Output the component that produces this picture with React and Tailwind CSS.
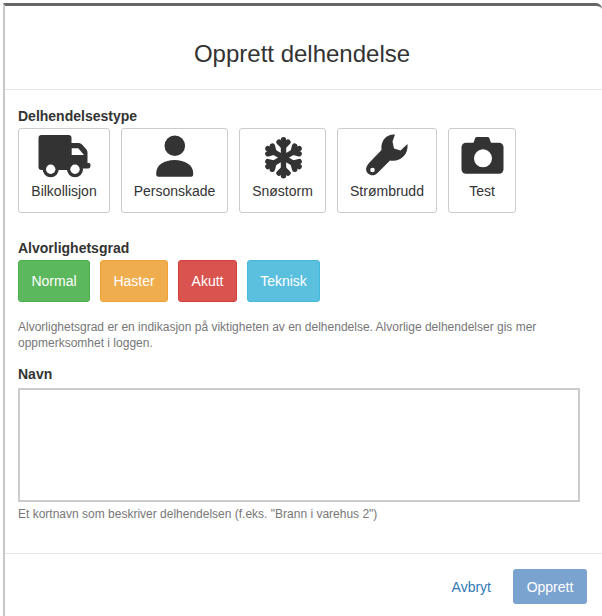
const INK = "#333";

function TruckIcon() {
  return (
    <svg width="66" height="50" viewBox="0 0 66 50" fill={INK}>
      <g transform="translate(-1 0)">
        <rect x="8.5" y="5" width="33" height="35" rx="3" />
        <path d="M41 13H49C50 13 51 13.5 52 14.5L56 19C57 20 57.5 21 57.5 23V33H59C60 33 60.5 34 60.5 35C60.5 37 60 38.5 58 38.5H41Z" />
        <path d="M41.7 18.3H48.3L54 25H41.7Z" fill="#fff" />
        <circle cx="20.7" cy="39.3" r="8" />
        <circle cx="20.7" cy="39.3" r="4.7" fill="#fff" />
        <circle cx="45" cy="39.3" r="8" />
        <circle cx="45" cy="39.3" r="4.7" fill="#fff" />
      </g>
    </svg>
  );
}

function PersonIcon() {
  return (
    <svg width="60" height="50" viewBox="0 0 60 50" fill={INK}>
      <circle cx="29.8" cy="15.7" r="10.3" />
      <path d="M11.2 44V43C11.2 35 19.5 30 29.5 30C39.5 30 48.2 35 48.2 43V44C48.2 45.8 47.5 46.7 46 46.7H13.4C11.9 46.7 11.2 45.8 11.2 44Z" />
    </svg>
  );
}

function SnowIcon() {
  return (
    <svg width="60" height="50" viewBox="0 0 60 50" stroke={INK} strokeWidth="5.4" strokeLinecap="round" fill="none">
      <g transform="translate(30.5 27.7)">
        {[0, 60, 120, 180, 240, 300].map((a) => (
          <g key={a} transform={`rotate(${a})`}>
            <path d="M0 0V-18" />
            <path d="M-4.5 -15.5L0 -11L4.5 -15.5" />
          </g>
        ))}
      </g>
    </svg>
  );
}

function WrenchIcon() {
  return (
    <svg width="60" height="50" viewBox="0 0 60 50" fill={INK}>
      <g transform="translate(3 0)">
        <path d="M35 4.5C26 4 20.5 11 21.5 20L9.5 32.5C5 37.5 5.5 41 8 43.5C11 46 14.5 46 17.5 43L30 30.5C40.5 32 48.5 25 47.5 14L40.5 20.5L34 18.5L32.5 11.5Z" />
        <circle cx="12.5" cy="40" r="2.3" fill="#fff" />
      </g>
    </svg>
  );
}

function CameraIcon() {
  return (
    <svg width="55" height="50" viewBox="0 0 55 50" fill={INK}>
      <g transform="translate(0.5 0)">
        <path d="M18 13L19.5 8.5C19.8 7.6 20.5 7 21.5 7H32C33 7 33.7 7.6 34 8.5L35.5 13Z" />
        <rect x="6" y="12.7" width="42" height="31" rx="4.5" />
        <circle cx="27.5" cy="28.3" r="9" fill="#fff" />
      </g>
    </svg>
  );
}

const types = [
  { label: "Bilkollisjon", icon: TruckIcon, size: "w-[92px]" },
  { label: "Personskade", icon: PersonIcon, size: "w-[107px]" },
  { label: "Snøstorm", icon: SnowIcon, size: "w-[87px]" },
  { label: "Strømbrudd", icon: WrenchIcon, size: "w-[100px]" },
  { label: "Test", icon: CameraIcon, size: "w-[68px]" },
];

const levels = [
  { label: "Normal", cls: "w-[72px] bg-[#5cb85c] border-[#4cae4c]" },
  { label: "Haster", cls: "w-[68px] bg-[#f0ad4e] border-[#eea236]" },
  { label: "Akutt", cls: "w-[59px] bg-[#d9534f] border-[#d43f3a]" },
  { label: "Teknisk", cls: "w-[73px] bg-[#5bc0de] border-[#46b8da]" },
];

export default function App() {
  return (
    <div className="h-[616px] w-[602px] overflow-hidden bg-white pt-[3px] pl-[3px] font-['Liberation_Sans',Arial,sans-serif] text-[#333]">
      <div className="h-[620px] w-[599px] rounded-tr-md border-t-[3px] border-l-2 border-t-[#666] border-l-[#c8c8c8]">
        <div className="flex h-[84px] items-center justify-center border-b border-[#e5e5e5] pt-[12px] pr-[3px]">
          <h1 className="text-2xl">Opprett delhendelse</h1>
        </div>

        <div className="pt-[16px] pl-[13px]">
          <div className="text-sm leading-[20px] font-bold">Delhendelsestype</div>
          <div className="mt-[2px] flex gap-[11px]">
            {types.map((t) => (
              <button
                key={t.label}
                className={`flex h-[85px] flex-col items-center rounded-[3px] border border-[#ccc] bg-white pt-[1px] text-sm ${t.size}`}
              >
                <t.icon />
                <span className="mt-[1px] leading-[20px]">{t.label}</span>
              </button>
            ))}
          </div>

          <div className="mt-[25px] text-sm leading-[20px] font-bold">Alvorlighetsgrad</div>
          <div className="mt-[2px] flex gap-[10px]">
            {levels.map((l) => (
              <button key={l.label} className={`h-[42px] rounded-[3px] border text-sm text-white ${l.cls}`}>
                {l.label}
              </button>
            ))}
          </div>

          <p className="mt-[17px] w-[560px] text-xs leading-[16px] text-[#777]">
            Alvorlighetsgrad er en indikasjon på viktigheten av en delhendelse. Alvorlige delhendelser gis mer oppmerksomhet i loggen.
          </p>

          <div className="mt-[13px] text-sm leading-[20px] font-bold">Navn</div>
          <textarea className="mt-[4px] block h-[114px] w-[562px] resize-none border-2 border-[#ccc] bg-white" />
          <p className="mt-[4px] text-xs leading-[16px] text-[#777]">
            Et kortnavn som beskriver delhendelsen (f.eks. "Brann i varehus 2")
          </p>
        </div>

        <div className="mt-[31px] flex items-start justify-end gap-[22px] border-t border-[#e5e5e5] pt-[15px] pr-[15px]">
          <a className="text-sm leading-[36px] text-[#337ab7]">Avbryt</a>
          <button className="h-[35px] w-[74px] rounded-[3px] bg-[#7ba3cf] text-sm text-white">Opprett</button>
        </div>
      </div>
    </div>
  );
}
